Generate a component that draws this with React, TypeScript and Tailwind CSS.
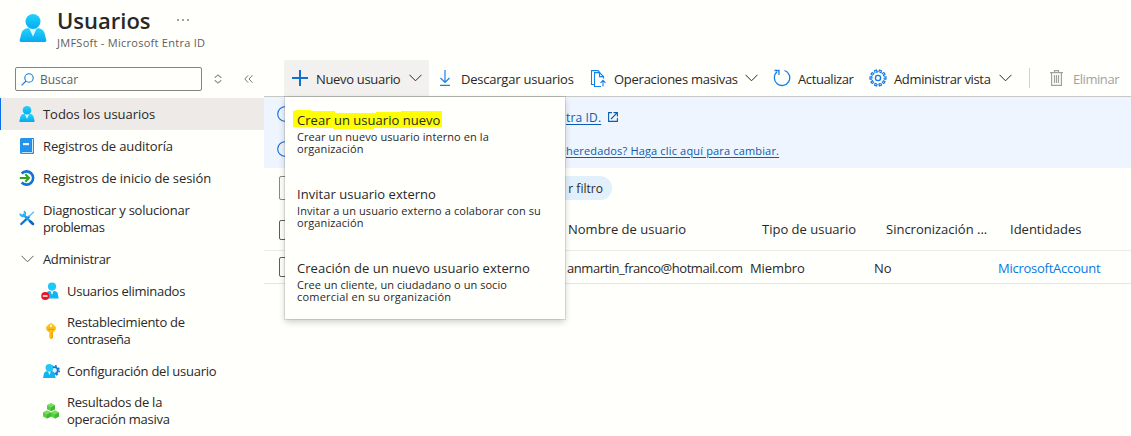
import React from "react";

type IconProps = { className?: string };

function Person({ className = "" }: IconProps) {
  return (
    <svg viewBox="0 0 16 16" className={className}>
      <defs>
        <linearGradient id="person" x1="0" y1="0" x2="0" y2="1">
          <stop offset="0" stopColor="#22d3fb" />
          <stop offset="1" stopColor="#08a9f0" />
        </linearGradient>
      </defs>
      <path d="M1.2 16C.5 16 .3 15.600.4 15L1.300 11.300C1.700 9.700 2.800 8.300 4.600 8.100H11.400C13.200 8.300 14.300 9.700 14.700 11.300L15.600 15C15.700 15.600 15.500 16 14.800 16Z" fill="url(#person)" />
      <path d="M5.800 8H10.200L8 13Z" fill="#d9f6ff" />
      <circle cx="8" cy="4.300" r="4.300" fill="url(#person)" />
    </svg>
  );
}

function Book() {
  return (
    <svg viewBox="0 0 16 16" className="size-4">
      <path d="M2.500 0H14a1 1 0 0 1 1 1V14.500a1.500 1.500 0 0 1-1.500 1.500H2.500z" fill="#1777d2" />
      <path d="M2.500 14H13.500V15.200H2.500z" fill="#bfe3fb" />
      <path d="M13 1H14.200V14.500H13z" fill="#d5ecfb" />
      <path d="M2.500 0H12.800V13.800H3.200L2.500 16A1.500 1.500 0 0 1 1 14.500V1.500A1.500 1.500 0 0 1 2.500 0z" fill="#2493ee" />
      <path d="M4 5H10V7.200H4z" fill="#f2f9ff" />
    </svg>
  );
}

function SignIn() {
  return (
    <svg viewBox="0 0 16 16" className="size-4" fill="none">
      <path d="M2.700 3.500A6.600 6.600 0 1 1 2.700 12.500" stroke="#1272d6" strokeWidth="2.600" />
      <path d="M.8 8H10M6.300 4.300L10 8L6.300 11.700" stroke="#2ca51c" strokeWidth="2" />
    </svg>
  );
}

function Tools() {
  return (
    <svg viewBox="0 0 16 16" className="size-4" fill="none">
      <path d="M2.300 14L9.800 6.800" stroke="#0c74d4" strokeWidth="2.300" strokeLinecap="round" />
      <path d="M9.500 7L14.800 1.800" stroke="#62b9ee" strokeWidth="1.400" />
      <path d="M4.500 4.800L13 13.200" stroke="#1b9de8" strokeWidth="2.400" strokeLinecap="round" />
      <path d="M1.200 3.600A3 3 0 0 0 4.300 6.200A2.600 2.600 0 0 0 4.800 1.300" stroke="#2cb3f2" strokeWidth="1.900" />
      <path d="M11.300 11.300L14 14" stroke="#0c65c0" strokeWidth="2.500" strokeLinecap="round" />
    </svg>
  );
}

function DeletedUser() {
  return (
    <svg viewBox="0 0 18 18" className="-ml-[2px] size-[18px] shrink-0">
      <path d="M4.500 16.500L5.500 11.500C6 10 7 9 8.500 9H13.500C15.200 9 16.200 10 16.700 11.500L17.700 16.500Z" fill="#10b4f3" />
      <path d="M9.300 9H12.700L11 13z" fill="#d9f6ff" />
      <circle cx="11" cy="4.600" r="4.100" fill="#1fc8f8" />
      <circle cx="4.200" cy="14" r="4" fill="#ef1520" />
      <path d="M1.800 13.100H6.600V14.900H1.800z" fill="#ffd9d9" />
    </svg>
  );
}

function Key() {
  return (
    <svg viewBox="0 0 16 16" className="size-4">
      <path d="M8 .2C9 .2 13 3 13 5C13 7 11.500 8.300 10 9.200V14.500L8.500 16H7.500L6.300 14.500V9.200C4.500 8.300 3 7 3 5C3 3 7 .2 8 .2z" fill="#fbbd16" />
      <path d="M8.500 9.500H10V14.500L8.500 16z" fill="#eda60c" />
      <path d="M4.800 5.900H11.200V6.800H4.800z" fill="#dd9a10" />
      <circle cx="8" cy="2.700" r="1.200" fill="#fff3d0" />
    </svg>
  );
}

function UserGear() {
  return (
    <svg viewBox="0 0 16 16" className="size-4 overflow-visible">
      <circle cx="11.500" cy="7.500" r="3.300" fill="#d8efff" stroke="#1272d6" strokeWidth="1.800" />
      <circle cx="11.500" cy="7.500" r="4.700" fill="none" stroke="#1272d6" strokeWidth="1.600" strokeDasharray="1.850 1.840" />
      <path d="M0 15L.9 10.700C1.300 9.300 2.300 8.300 3.800 8.300H8.800C10.400 8.300 11.300 9.300 11.700 10.700L12.600 15Z" fill="#10b4f3" />
      <path d="M4.800 8.300H8L6.400 12z" fill="#d9f6ff" />
      <circle cx="6.300" cy="4.700" r="3.800" fill="#1fc8f8" />
    </svg>
  );
}

function Cube({ x, y }: { x: number; y: number }) {
  return (
    <g transform={`translate(${x} ${y})`}>
      <path d="M4 0L8 2.100V6L4 8.100L0 6V2.100z" fill="#56cc3e" />
      <path d="M4 0L8 2.100L4 4.200L0 2.100z" fill="#7cdc62" />
      <path d="M4 4.200L8 2.100V6L4 8.100z" fill="#42b635" />
    </g>
  );
}

function Cubes() {
  return (
    <svg viewBox="0 0 16 16" className="size-4">
      <Cube x={4} y={0.2} />
      <Cube x={0} y={7.400} />
      <Cube x={8} y={7.400} />
    </svg>
  );
}

function Chevron({ className = "" }: IconProps) {
  return (
    <svg viewBox="0 0 13 8" className={`h-2 w-[13px] shrink-0 ${className}`} fill="none" stroke="currentColor" strokeWidth="1">
      <path d="M.5 .8L6.500 6.800L12.500 .8" />
    </svg>
  );
}

function NoticeRing() {
  return (
    <svg viewBox="0 0 16 16" className="size-4 shrink-0" fill="none" stroke="#0f6cdb" strokeWidth="1.100">
      <circle cx="8" cy="8" r="7.300" />
    </svg>
  );
}

function Gear() {
  const teeth = Array.from({ length: 10 }, (_, i) => i * 36 + 18);
  return (
    <svg viewBox="0 0 18 18" className="size-[18px] shrink-0" fill="none" stroke="#0f78e4" strokeWidth="1.100">
      <circle cx="9" cy="9" r="2.600" strokeWidth="1.300" />
      <circle cx="9" cy="9" r="6.100" strokeDasharray="2.030 1.800" strokeDashoffset="1.015" />
      {teeth.map((a) => (
        <path key={a} d="M7.900 3.200V1H10.100V3.200" transform={`rotate(${a} 9 9)`} />
      ))}
    </svg>
  );
}

function NavItem({ icon, children, sub, selected, tall, track = "" }: {
  icon: React.ReactNode; children: React.ReactNode; sub?: boolean; selected?: boolean; tall?: boolean; track?: string;
}) {
  return (
    <div
      className={`flex items-center gap-2 border-l ${sub ? "pl-[42px]" : "pl-[18px]"} ${
        selected ? "border-[#0a6fe8] bg-[#eeeae7]" : "border-transparent"
      } ${tall ? "h-12" : "h-8"}`}
    >
      <span className="flex w-4 shrink-0 justify-center">{icon}</span>
      <span className={`whitespace-nowrap leading-[17px] ${track}`}>{children}</span>
    </div>
  );
}

function MenuItem({ title, mark, track, children }: { title: string; mark?: boolean; track: string; children: React.ReactNode }) {
  return (
    <div className="h-[74px] pl-3 pt-[13px]">
      <div className="relative h-[21px] whitespace-nowrap leading-[21px]">
        {mark && (
          <svg viewBox="0 0 149 20" className="absolute -left-1 top-0 h-5 w-[149px]">
            <path d="M2 0H18V1H42V3H83V2H108V1H149V17H117V18H81V19H40V18H24V17H0V1H2z" fill="#ffff00" />
          </svg>
        )}
        <span className="relative tracking-[0.03px]">{title}</span>
      </div>
      <div className={`whitespace-nowrap text-[11px] leading-3 ${track}`}>{children}</div>
    </div>
  );
}

export default function App() {
  return (
    <div className="relative flex h-[436px] w-[1131px] flex-col overflow-hidden bg-[#fffffc] font-['Open_Sans','Noto_Sans',sans-serif] text-[13px] text-[#292827]">
      <header className="flex h-[60px] shrink-0 pl-[19px]">
        <Person className="mt-[14px] size-7" />
        <div className="ml-[10px] flex flex-col">
          <div className="flex h-9 items-center pt-[3px]">
            <h1 className="text-[22px] font-semibold leading-9">Usuarios</h1>
            <span className="ml-[26px] flex gap-[3px]">
              <i className="size-[2px] bg-[#a3a19f]" />
              <i className="size-[2px] bg-[#a3a19f]" />
              <i className="size-[2px] bg-[#a3a19f]" />
            </span>
          </div>
          <span className="text-[11px] leading-[14px] tracking-[0.27px] text-[#605e5c]">JMFSoft - Microsoft Entra ID</span>
        </div>
      </header>

      <div className="flex min-h-0 flex-1">
        <aside className="w-[264px] shrink-0">
          <div className="flex h-[38px] items-start pl-[15px] pt-[7px]">
            <div className="flex h-6 w-[187px] items-center rounded-[2px] border border-[#868482] pl-[5px]">
              <svg viewBox="0 0 13 13" className="size-[13px]" fill="none" stroke="#1678dd" strokeWidth="1.100">
                <circle cx="8" cy="5" r="4.200" />
                <path d="M5 8L.6 12.400" />
              </svg>
              <span className="ml-[6px] pt-px text-[12px] text-[#605e5c]">Buscar</span>
            </div>
            <svg viewBox="0 0 8 10" className="ml-3 mt-[7px] h-[10px] w-2" fill="none" stroke="#979593" strokeWidth="1.200">
              <path d="M1.200 4V3.200L4 1L6.800 3.200V4M1.200 6V6.800L4 9L6.800 6.800V6" />
            </svg>
            <svg viewBox="0 0 9 8" className="ml-[22px] mt-2 h-2 w-[9px]" fill="none" stroke="#797775" strokeWidth="1">
              <path d="M4.200 .3L.8 4L4.200 7.700M8.400 .3L5 4L8.400 7.700" />
            </svg>
          </div>
          <nav>
            <NavItem selected track="pt-px tracking-[-0.05px]" icon={<Person className="size-4" />}>Todos los usuarios</NavItem>
            <NavItem track="pt-px tracking-[-0.12px]" icon={<Book />}>Registros de auditoría</NavItem>
            <NavItem track="pt-px tracking-[-0.08px]" icon={<SignIn />}>Registros de inicio de sesión</NavItem>
            <div className="pb-px">
              <NavItem tall track="pt-px tracking-[-0.22px]" icon={<Tools />}>Diagnosticar y solucionar<br /><span className="tracking-[-0.4px]">problemas</span></NavItem>
            </div>
            <NavItem track="tracking-[-0.36px]" icon={<Chevron className="text-[#605e5c]" />}>Administrar</NavItem>
            <NavItem sub track="tracking-[-0.27px]" icon={<DeletedUser />}>Usuarios eliminados</NavItem>
            <NavItem sub tall track="tracking-[-0.28px]" icon={<Key />}>Restablecimiento de<br /><span className="tracking-[-0.45px]">contraseña</span></NavItem>
            <NavItem sub track="tracking-[-0.25px]" icon={<UserGear />}>Configuración del usuario</NavItem>
            <NavItem sub tall track="tracking-[-0.25px]" icon={<Cubes />}>Resultados de la<br />operación masiva</NavItem>
          </nav>
        </aside>

        <main className="min-w-0 flex-1">
          <div className="flex h-[37px] items-stretch border-b border-[#c8c8c6] pl-5">
            <button className="flex w-[145px] items-center bg-[#f3f1ef] pl-2">
              <svg viewBox="0 0 16 16" className="size-4 shrink-0" stroke="#0f6fd2" strokeWidth="2"><path d="M8 0V16M0 8H16" /></svg>
              <span className="ml-2 w-[85px] whitespace-nowrap pt-[3px] text-left tracking-[-0.32px]">Nuevo usuario</span>
              <Chevron className="ml-2" />
            </button>
            <button className="ml-[10px] flex w-[135px] items-center">
              <svg viewBox="0 0 12 16" className="h-4 w-3 shrink-0" fill="none" stroke="#1580e8" strokeWidth="1.200"><path d="M6 0V12M1.500 8L6 12.400L10.500 8M1 15.300H11" /></svg>
              <span className="ml-[10px] whitespace-nowrap pt-[3px] tracking-[-0.22px]">Descargar usuarios</span>
            </button>
            <button className="ml-[16px] flex w-[168px] items-center">
              <svg viewBox="0 0 17 17" className="h-[17px] w-[17px] shrink-0" fill="none" stroke="#1580e8" strokeWidth="1.100">
                <path d="M4 14.500H1.500V.6H8L10 2.600M11 16.500H4.500V2.600H9.500L13.500 6.600V8.500M9.500 2.600V6.600H13.500M13 16.500V10.300M10.500 12.800L13 10.300L15.500 12.800" />
              </svg>
              <span className="ml-[7px] w-[124px] shrink-0 whitespace-nowrap pt-[3px] text-left tracking-[-0.26px]">Operaciones masivas</span>
              <Chevron className="ml-[7px]" />
            </button>
            <button className="ml-[15px] flex w-[81px] items-center">
              <svg viewBox="0 0 18 18" className="size-[18px] shrink-0" fill="none" stroke="#1580e8" strokeWidth="1.300">
                <path d="M11.500 1.500A7.700 7.700 0 1 1 4.200 2.800M1.500 1.500H6V6" />
              </svg>
              <span className="ml-[7px] whitespace-nowrap pt-[3px] tracking-[-0.4px]">Actualizar</span>
            </button>
            <button className="ml-[15px] flex w-[143px] items-center">
              <Gear />
              <span className="ml-[7px] w-[97px] shrink-0 whitespace-nowrap pt-[3px] text-left tracking-[-0.36px]">Administrar vista</span>
              <Chevron className="ml-2" />
            </button>
            <div className="ml-[17px] mt-2 h-5 w-px bg-[#d2d0ce]" />
            <button className="ml-5 flex items-center text-[#a3a19f]">
              <svg viewBox="0 0 13 16" className="h-4 w-[13px] shrink-0" fill="none" stroke="currentColor" strokeWidth="1.200"><path d="M0 2.600H13M4.500 2.500V.6H8.500V2.500M1.600 2.600V15.400H11.400V2.600M4.500 5V13M6.500 5V13M8.500 5V13" /></svg>
              <span className="ml-[10px] pt-[3px] tracking-[-0.45px]">Eliminar</span>
            </button>
          </div>

          <div className="h-[71px] bg-[#eff5fe] pl-[13px] text-[12px] text-[#0b5cad]">
            <div className="flex h-[37px] items-center">
              <span className="-mt-1 flex"><NoticeRing /></span>
              <span className="ml-[273px] mt-1 whitespace-nowrap tracking-[0.15px] underline underline-offset-2">tra ID.</span>
              <svg viewBox="0 0 10 10" className="ml-[7px] mt-[3px] size-[10px]" fill="none" stroke="currentColor" strokeWidth="1.100"><path d="M4 .6H.6V9.400H9.400V6M5.500 .6H9.400V4.500M9.400 .6L3 7" /></svg>
            </div>
            <div className="flex h-[34px] items-center">
              <span className="-mt-1 flex"><NoticeRing /></span>
              <span className="ml-[273px] whitespace-nowrap text-[11px] tracking-[0.16px] underline underline-offset-2">heredados? Haga clic aquí para cambiar.</span>
            </div>
          </div>

          <div className="flex h-[42px] items-start pl-[15px] pt-2">
            <div className="h-6 w-[200px] rounded-[2px] border border-[#8a8886]" />
            <div className="ml-2 flex h-6 w-[125px] items-center justify-end rounded-full bg-[#e2f0fb] pr-[9px] pt-px text-[12px] tracking-[0.03px]">r filtro</div>
          </div>

          <div className="flex h-[41px] items-center border-b border-[#edebe9] pl-[15px]">
            <div className="size-5 rounded-[2px] border border-[#605e5c]" />
            <span className="ml-[269px] w-[194px]">Nombre de usuario</span>
            <span className="w-[124px]">Tipo de usuario</span>
            <span className="w-[124px]">Sincronización ...</span>
            <span>Identidades</span>
          </div>
          <div className="flex h-[33px] items-center border-b border-[#e4e6e4] pl-[15px]">
            <div className="size-5 rounded-[2px] border border-[#605e5c]" />
            <span className="ml-[268px] w-[183px] whitespace-nowrap pt-[3px] tracking-[-0.45px]">anmartin_franco@hotmail.com</span>
            <span className="w-[124px] pt-[3px] tracking-[-0.1px]">Miembro</span>
            <span className="w-[124px] pt-[3px]">No</span>
            <span className="pt-[3px] tracking-[-0.26px] text-[#0a78e8]">MicrosoftAccount</span>
          </div>
        </main>
      </div>

      <div className="absolute left-[285px] top-[97px] h-[222px] w-[280px] bg-[#fffffc] shadow-[0_0_0_1px_rgba(0,0,0,0.1),0_3px_7px_rgba(0,0,0,0.2)]">
        <MenuItem mark title="Crear un usuario nuevo" track="tracking-[0.09px]">Crear un nuevo usuario interno en la<br />organización</MenuItem>
        <MenuItem title="Invitar usuario externo" track="tracking-[0.09px]">Invitar a un usuario externo a colaborar con su<br />organización</MenuItem>
        <MenuItem title="Creación de un nuevo usuario externo" track="tracking-[0.2px]"><span className="tracking-[0.05px]">Cree un cliente, un ciudadano o un socio</span><br />comercial en su organización</MenuItem>
      </div>
    </div>
  );
}
